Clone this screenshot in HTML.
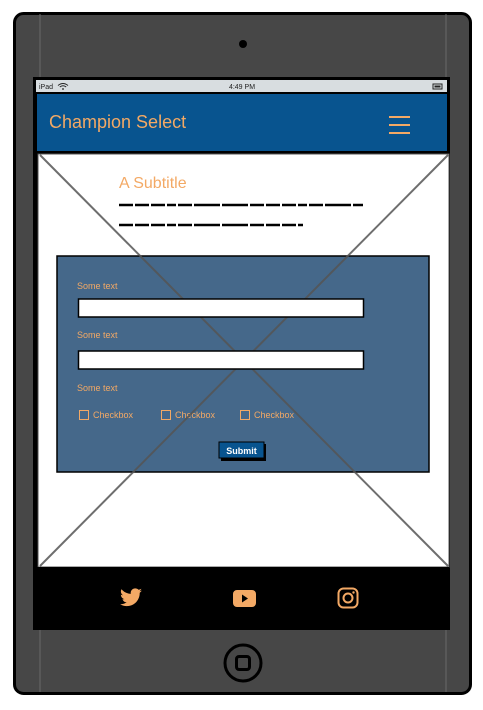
<!DOCTYPE html>
<html><head><meta charset="utf-8"><style>
html,body{margin:0;padding:0;background:#fff;}
svg{display:block}
text{font-family:"Liberation Sans",sans-serif}
</style></head><body>
<svg width="483" height="710" viewBox="0 0 483 710" xmlns="http://www.w3.org/2000/svg">
<rect x="14.5" y="13.5" width="456" height="680" rx="9" fill="#474747" stroke="#000" stroke-width="3"/>
<line x1="40" y1="14" x2="40" y2="692" stroke="#6a6a6a" stroke-width="1"/>
<line x1="446" y1="14" x2="446" y2="692" stroke="#6a6a6a" stroke-width="1"/>
<circle cx="243" cy="44" r="4" fill="#000"/>
<rect x="33" y="77" width="417" height="553" fill="#000"/>
<rect x="36" y="80" width="411" height="12" fill="#d8dde0"/>
<text x="39" y="89" font-size="7" fill="#222">iPad</text>
<path d="M58 85.5 q5 -4 10 0 M59.8 87 q3.2 -2.5 6.4 0" stroke="#222" stroke-width="1" fill="none"/>
<circle cx="63" cy="89" r="0.9" fill="#222"/>
<text x="242" y="89" font-size="7" fill="#222" text-anchor="middle">4:49 PM</text>
<rect x="433" y="84" width="9" height="5" fill="none" stroke="#222" stroke-width="1"/>
<rect x="434.5" y="85.5" width="6" height="2" fill="#222"/>
<rect x="37" y="94" width="410" height="57" fill="#08548f"/>
<text x="49" y="128" font-size="18" fill="#f3a965">Champion Select</text>
<rect x="389" y="116" width="21" height="2" fill="#f3a965"/>
<rect x="389" y="124" width="21" height="2" fill="#f3a965"/>
<rect x="389" y="132" width="21" height="2" fill="#f3a965"/>
<rect x="38" y="154" width="411" height="413" fill="#fff" stroke="#555" stroke-width="1"/>
<text x="119" y="188" font-size="16" fill="#f3a965">A Subtitle</text>
<path d="M119 205 H363 M119 225 H303" stroke="#000" stroke-width="2.5" stroke-dasharray="14 2 14 2 14 2 9 2 14 2 26 2 26 2"/>
<rect x="57" y="256" width="372" height="216" fill="#45688a" stroke="#000" stroke-width="1.5"/>
<text x="77" y="289" font-size="9" fill="#f3a965">Some text</text>
<text x="77" y="338" font-size="9" fill="#f3a965">Some text</text>
<text x="77" y="391" font-size="9" fill="#f3a965">Some text</text>
<g fill="none" stroke="#f3a965" stroke-width="1">
<rect x="79.5" y="410.5" width="9" height="9"/>
<rect x="161.5" y="410.5" width="9" height="9"/>
<rect x="240.5" y="410.5" width="9" height="9"/>
</g>
<g font-size="9" fill="#f3a965">
<text x="93" y="418">Checkbox</text>
<text x="175" y="418">Checkbox</text>
<text x="254" y="418">Checkbox</text>
</g>
<line x1="40" y1="155" x2="448" y2="566" stroke="#555" stroke-width="2" opacity="0.85"/>
<line x1="448" y1="155" x2="40" y2="566" stroke="#555" stroke-width="2" opacity="0.85"/>
<rect x="78.5" y="299" width="285" height="18" fill="#fff" stroke="#000" stroke-width="1.5"/>
<rect x="78.5" y="351" width="285" height="18" fill="#fff" stroke="#000" stroke-width="1.5"/>
<rect x="221" y="444" width="45" height="17" fill="#000"/>
<rect x="219" y="442" width="45" height="16" fill="#08548f" stroke="#000" stroke-width="1"/>
<text x="241.5" y="454" font-size="9" font-weight="bold" fill="#fff" text-anchor="middle">Submit</text>
<rect x="36" y="567" width="413" height="63" fill="#000"/>
<path fill="#f3a965" d="M142 590.5c-.8.4-1.7.6-2.6.7.9-.6 1.6-1.4 2-2.5-.9.5-1.8.9-2.9 1.1-.8-.9-2-1.4-3.3-1.4-2.5 0-4.5 2-4.5 4.5 0 .4 0 .7.1 1-3.7-.2-7-2-9.3-4.7-.4.7-.6 1.4-.6 2.3 0 1.6.8 2.9 2 3.7-.7 0-1.4-.2-2-.6v.1c0 2.2 1.6 4 3.6 4.4-.4.1-.8.2-1.2.2-.3 0-.6 0-.8-.1.6 1.8 2.2 3.1 4.2 3.1-1.5 1.2-3.5 1.9-5.6 1.9-.4 0-.7 0-1.1-.1 2 1.3 4.4 2 6.9 2 8.3 0 12.8-6.9 12.8-12.8v-.6c.9-.6 1.7-1.4 2.3-2.3z"/>
<rect x="233" y="590" width="23" height="17" rx="4" fill="#f3a965"/>
<path d="M242 594.5 L248 598.5 L242 602.5z" fill="#000"/>
<rect x="338.5" y="588.5" width="19" height="19" rx="5" fill="none" stroke="#f3a965" stroke-width="2"/>
<circle cx="348" cy="598" r="4.5" fill="none" stroke="#f3a965" stroke-width="2"/>
<circle cx="353.5" cy="592.5" r="1.2" fill="#f3a965"/>
<circle cx="243" cy="663" r="18" fill="none" stroke="#000" stroke-width="3"/>
<rect x="236.5" y="656.5" width="13" height="13" rx="2.5" fill="none" stroke="#000" stroke-width="3"/>
</svg>
</body></html>
